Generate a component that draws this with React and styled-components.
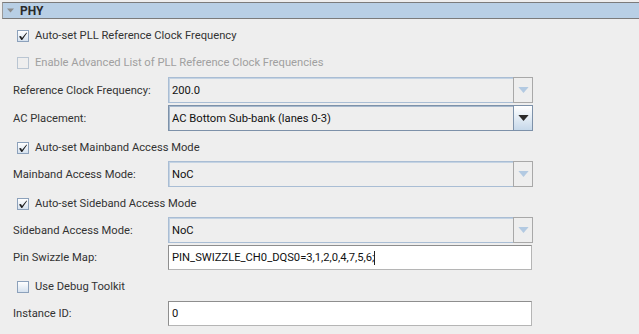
import styled, { createGlobalStyle } from 'styled-components'

const GlobalStyle = createGlobalStyle`
  html, body {
    margin: 0;
    padding: 0;
    background: #eeeeee;
  }
  body {
    font-family: Roboto, "Liberation Sans", sans-serif;
    font-size: 11.2px;
    color: #333333;
  }
`

function Arrow({ color }) {
  return (
    <svg width="12" height="7" viewBox="0 0 12 7">
      <path d="M0 0 H12 L6 7 Z" fill={color} />
    </svg>
  )
}

function Check({ checked, disabled }) {
  return (
    <Box $disabled={disabled}>
      {checked && (
        <svg width="10" height="10" viewBox="0 0 10 10">
          <path d="M1 5.5 L3 5 L4 7 L8.5 1.5 L9 2 L4.2 9 L3.4 9 Z" fill="#1e1e1e" />
        </svg>
      )}
    </Box>
  )
}

function CheckItem({ label, checked, disabled, top }) {
  return (
    <CheckRow $top={top}>
      <Check checked={checked} disabled={disabled} />
      <CheckLabel $disabled={disabled}>{label}</CheckLabel>
    </CheckRow>
  )
}

function Combo({ value, enabled }) {
  return (
    <ComboBox>
      <ComboField $enabled={enabled}>{value}</ComboField>
      <ComboButton $enabled={enabled}>
        <Arrow color={enabled ? '#2b2b2b' : '#b3cae2'} />
      </ComboButton>
    </ComboBox>
  )
}

function Field({ label, top, children }) {
  return (
    <FieldRow $top={top}>
      <FieldLabel>{label}</FieldLabel>
      {children}
    </FieldRow>
  )
}

export default function App() {
  return (
    <Page>
      <GlobalStyle />
      <Header>
        <Arrow color="#8c8c8c" />
        <HeaderTitle>PHY</HeaderTitle>
      </Header>
      <Body>
        <CheckItem top={3} checked label="Auto-set PLL Reference Clock Frequency" />
        <CheckItem top={0} disabled label="Enable Advanced List of PLL Reference Clock Frequencies" />
        <Field top={1} label="Reference Clock Frequency:">
          <Combo value="200.0" />
        </Field>
        <Field top={2} label="AC Placement:">
          <Combo enabled value="AC Bottom Sub-bank (lanes 0-3)" />
        </Field>
        <CheckItem top={3} checked label="Auto-set Mainband Access Mode" />
        <Field top={0} label="Mainband Access Mode:">
          <Combo value="NoC" />
        </Field>
        <CheckItem top={3} checked label="Auto-set Sideband Access Mode" />
        <Field top={0} label="Sideband Access Mode:">
          <Combo value="NoC" />
        </Field>
        <Field top={2} label="Pin Swizzle Map:">
          <TextInput>
            PIN_SWIZZLE_CH0_DQS0=3,1,2,0,4,7,5,6;<Caret />
          </TextInput>
        </Field>
        <CheckItem top={3} label="Use Debug Toolkit" />
        <Field top={1} label="Instance ID:">
          <TextInput>0</TextInput>
        </Field>
      </Body>
    </Page>
  )
}

const Page = styled.div`
  width: 639px;
  height: 334px;
  overflow: hidden;
  padding-top: 2px;
  box-sizing: border-box;
`

const Header = styled.div`
  display: flex;
  align-items: center;
  gap: 6px;
  height: 17px;
  margin-left: 2px;
  padding-left: 4px;
  box-sizing: border-box;
  background: #b8cfe5;
  border-top: 1px solid #7b7b7b;
  border-bottom: 1px solid #7b7b7b;
  border-left: 1px solid #9a9a9a;

  svg {
    width: 7px;
    height: 5px;
  }
`

const HeaderTitle = styled.span`
  font-weight: bold;
  font-size: 12px;
  color: #2a2a2a;
`

const Body = styled.div`
  display: flex;
  flex-direction: column;
  padding-left: 13px;
`

const CheckRow = styled.div`
  display: flex;
  align-items: center;
  gap: 6px;
  height: 27px;
  padding-left: 4px;
  margin-top: ${p => p.$top}px;
`

const Box = styled.div`
  width: 12px;
  height: 12px;
  box-sizing: border-box;
  display: flex;
  align-items: center;
  justify-content: center;
  border: 1px solid ${p => (p.$disabled ? '#b9c5d2' : '#8ca1bb')};
  background: ${p => (p.$disabled ? '#eeeeee' : 'linear-gradient(#ffffff, #d6e2ef)')};
`

const CheckLabel = styled.span`
  color: ${p => (p.$disabled ? '#a0a0a0' : '#333333')};
`

const FieldRow = styled.div`
  display: flex;
  align-items: center;
  margin-top: ${p => p.$top}px;
`

const FieldLabel = styled.span`
  width: 155px;
  flex-shrink: 0;
`

const ComboBox = styled.div`
  display: flex;
  width: 365px;
  height: 26px;
`

const ComboField = styled.div`
  flex: 1;
  display: flex;
  align-items: center;
  padding-left: 3px;
  box-sizing: border-box;
  border: 1px solid ${p => (p.$enabled ? '#7d91a9' : '#a9bdd4')};
  border-right: none;
  box-shadow: inset 1px 1px 0 ${p => (p.$enabled ? '#a6b8cc' : '#c4d3e3')};
  background: #eeeeee;
  color: #111111;
`

const ComboButton = styled.div`
  width: 20px;
  display: flex;
  align-items: center;
  justify-content: center;
  box-sizing: border-box;
  border: 1px solid ${p => (p.$enabled ? '#7d91a9' : '#a8a8a8')};
  background: ${p => (p.$enabled ? 'linear-gradient(#ffffff, #c6d8ea)' : '#eeeeee')};

  svg {
    width: 11px;
    height: 6px;
  }
`

const TextInput = styled.div`
  width: 364px;
  height: 25px;
  display: flex;
  align-items: center;
  padding-left: 3px;
  box-sizing: border-box;
  background: #ffffff;
  border: 1px solid #b5b5b5;
  border-top-color: #8e8e8e;
  border-left-color: #8e8e8e;
  color: #111111;
`

const Caret = styled.span`
  display: inline-block;
  width: 1px;
  height: 14px;
  background: #222222;
`
